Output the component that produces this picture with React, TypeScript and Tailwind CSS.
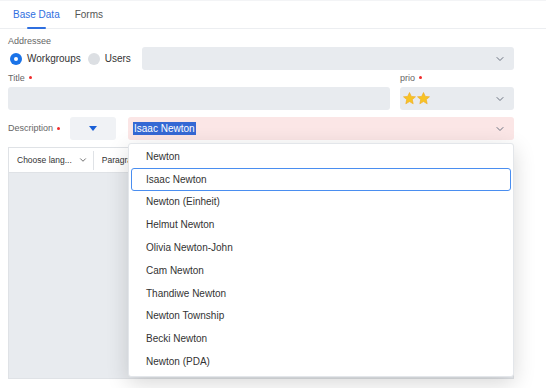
import React from "react";
import { ChevronDown } from "lucide-react";

const items = [
  "Newton",
  "Isaac Newton",
  "Newton (Einheit)",
  "Helmut Newton",
  "Olivia Newton-John",
  "Cam Newton",
  "Thandiwe Newton",
  "Newton Township",
  "Becki Newton",
  "Newton (PDA)",
];

function Star({ x }: { x: number }) {
  return (
    <polygon
      transform={`translate(${x},0)`}
      points="6.5,0.5 8.3,4.4 12.5,4.8 9.3,7.6 10.2,11.8 6.5,9.6 2.8,11.8 3.7,7.6 0.5,4.8 4.7,4.4"
      fill="#f7c325"
      stroke="#f0a81c"
      strokeWidth="0.6"
    />
  );
}

function Dot() {
  return <span className="inline-block w-[3px] h-[3px] rounded-full bg-[#ef2b2b] ml-[4px] mb-[1px]" />;
}

export default function App() {
  return (
    <div
      className="relative w-[546px] h-[388px] bg-white overflow-hidden text-[#333]"
      style={{ fontFamily: '"Liberation Sans", Arial, sans-serif' }}
    >
      {/* Tabs */}
      <div className="flex h-[29px] border-b border-[#eceef1] border-t border-t-[#f3f4f6] pl-[13px] gap-[15px] text-[10px]">
        <div className="relative flex items-center text-[#2f6fdf]">
          Base Data
          <span className="absolute bottom-[-1px] left-[14px] w-[19px] h-[2px] bg-[#2f6fdf] rounded" />
        </div>
        <div className="flex items-center text-[#555]">Forms</div>
      </div>

      <div className="pl-[8px] pr-[32px]">
        <div className="mt-[6px] h-[12px] leading-[12px] text-[9px] text-[#666]">Addressee</div>
        <div className="flex items-center h-[23px] text-[10px]">
          <span className="w-[12px] h-[12px] rounded-full bg-[#1a73e8] flex items-center justify-center ml-[2px]">
            <span className="w-[4px] h-[4px] rounded-full bg-white" />
          </span>
          <span className="ml-[5px] text-[#333]">Workgroups</span>
          <span className="w-[12px] h-[12px] rounded-full bg-[#dcdfe3] ml-[7px]" />
          <span className="ml-[5px] text-[#333]">Users</span>
          <div className="ml-[11px] flex-1 h-[23px] rounded-[3px] bg-[#e8ebef] flex items-center justify-end pr-[8px]">
            <ChevronDown size={12} className="text-[#6b7280]" />
          </div>
        </div>

        <div className="flex gap-[10px] mt-[2px]">
          <div className="flex-1">
            <div className="h-[12px] leading-[12px] text-[9px] text-[#666] flex items-center">
              Title
              <Dot />
            </div>
            <div className="mt-[3px] h-[23px] rounded-[3px] bg-[#e8ebef]" />
          </div>
          <div className="w-[114px]">
            <div className="h-[12px] leading-[12px] text-[9px] text-[#666] flex items-center">
              prio
              <Dot />
            </div>
            <div className="mt-[3px] h-[23px] rounded-[3px] bg-[#e8ebef] flex items-center justify-between pl-[3px] pr-[8px]">
              <svg width="28" height="13" viewBox="0 0 28 13">
                <Star x={0} />
                <Star x={14} />
              </svg>
              <ChevronDown size={12} className="text-[#6b7280]" />
            </div>
          </div>
        </div>

        <div className="flex items-center mt-[7px] h-[23px]">
          <div className="w-[62px] text-[9px] text-[#666] flex items-center">
            Description
            <Dot />
          </div>
          <div className="w-[46px] h-[23px] rounded-[3px] bg-[#f0f2f5] flex items-center justify-center">
            <svg width="8" height="5" viewBox="0 0 8 5">
              <polygon points="0,0 8,0 4,5" fill="#1a5fd6" />
            </svg>
          </div>
          <div className="ml-[12px] flex-1 h-[23px] rounded-[3px] bg-[#fbe6e6] flex items-center justify-between pl-[5px] pr-[8px]">
            <span className="bg-[#3568d4] text-white text-[10px] leading-[13px] px-[1px]">Isaac Newton</span>
            <ChevronDown size={12} className="text-[#6b7280]" />
          </div>
        </div>

        <div className="mt-[7px] h-[232px] border border-[#dfe2e6] flex flex-col">
          <div className="h-[25px] bg-white border-b border-[#dfe2e6] flex items-center text-[8.5px] text-[#333]">
            <span className="ml-[8px]">Choose lang...</span>
            <ChevronDown size={10} className="ml-[6px] text-[#555]" />
            <span className="ml-[5px] w-px h-[19px] bg-[#dfe2e6]" />
            <span className="ml-[8px]">Paragraph</span>
          </div>
          <div className="flex-1 bg-[#e8ebef]" />
        </div>
      </div>

      {/* Dropdown */}
      <div className="absolute left-[128px] top-[143px] w-[386px] h-[234px] bg-white rounded-[3px] border border-[#e3e6ea] shadow-[0_6px_22px_rgba(0,0,0,0.16)] px-[2px] py-[1px]">
        {items.map((it, i) => (
          <div
            key={it}
            className={
              "h-[22.8px] flex items-center pl-[14px] text-[10px] text-[#333] rounded-[3px] " +
              (i === 1 ? "border-[1.5px] border-[#4a8ef0]" : "border-[1.5px] border-transparent")
            }
          >
            {it}
          </div>
        ))}
      </div>
    </div>
  );
}
